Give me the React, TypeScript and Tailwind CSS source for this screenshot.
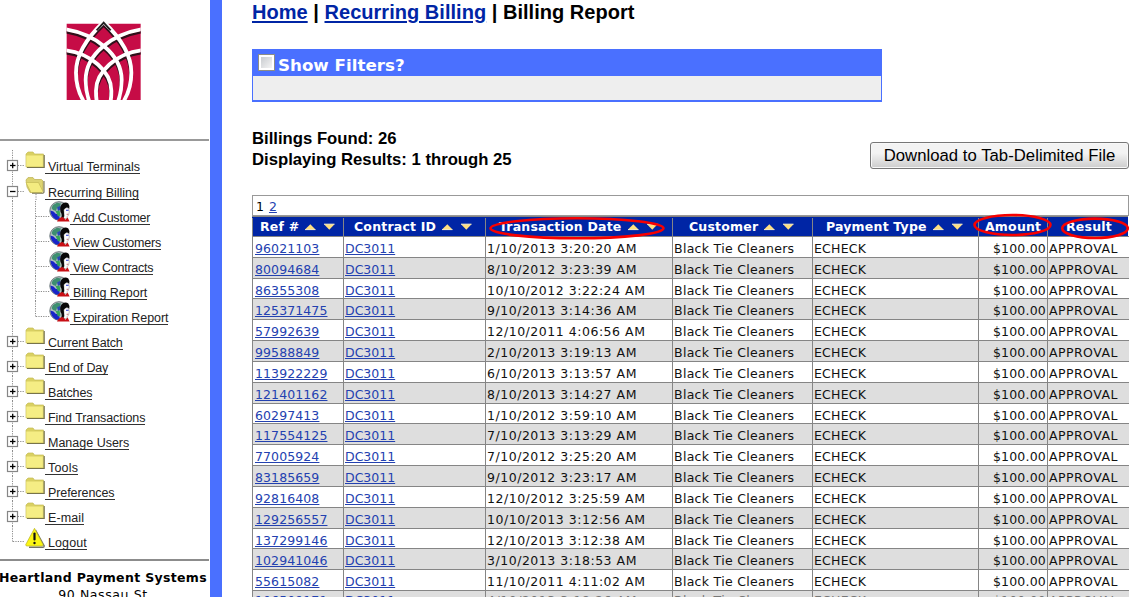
import React from "react";

type Row = [string, string];

const rows: Row[] = [
  ["96021103", "1/10/2013 3:20:20 AM"],
  ["80094684", "8/10/2012 3:23:39 AM"],
  ["86355308", "10/10/2012 3:22:24 AM"],
  ["125371475", "9/10/2013 3:14:36 AM"],
  ["57992639", "12/10/2011 4:06:56 AM"],
  ["99588849", "2/10/2013 3:19:13 AM"],
  ["113922229", "6/10/2013 3:13:57 AM"],
  ["121401162", "8/10/2013 3:14:27 AM"],
  ["60297413", "1/10/2012 3:59:10 AM"],
  ["117554125", "7/10/2013 3:13:29 AM"],
  ["77005924", "7/10/2012 3:25:20 AM"],
  ["83185659", "9/10/2012 3:23:17 AM"],
  ["92816408", "12/10/2012 3:25:59 AM"],
  ["129256557", "10/10/2013 3:12:56 AM"],
  ["137299146", "12/10/2013 3:12:38 AM"],
  ["102941046", "3/10/2013 3:18:53 AM"],
  ["55615082", "11/10/2011 4:11:02 AM"],
  ["106509171", "4/10/2013 3:18:26 AM"],
];

const COLS = "grid grid-cols-[91px_142px_187px_140px_166px_69px_81px]";

function Petals() {
  return (
    <>
      <path d="M311 66 C262 112 228 165 228 218 C228 250 236 278 250 302" />
      <path d="M424 88 C340 102 257 160 257 240 C257 262 260 282 267 302" />
      <path d="M424 151 C350 160 288 215 288 272 C288 282 288 292 290 302" />
    </>
  );
}

function Logo() {
  return (
    <svg width="78" height="84" viewBox="195 54 234 252" className="block">
      <defs>
        <clipPath id="logo-area">
          <path d="M200 56 H422 V300 H200 Z" />
        </clipPath>
      </defs>
      <path d="M200 71 H422 V300 H200 Z" fill="#c60c46" />
      <path d="M290 70 L311 58 L332 70 Z" fill="#fff" />
      <g clipPath="url(#logo-area)" fill="none">
        <g stroke="#30101a" strokeWidth="8">
          <g transform="translate(2 8)"><Petals /></g>
          <g transform="translate(620 8) scale(-1 1)"><Petals /></g>
        </g>
        <g stroke="#fff" strokeWidth="11.5">
          <Petals />
          <g transform="translate(622 0) scale(-1 1)"><Petals /></g>
        </g>
        <path d="M290 91 L311 68 L332 91" stroke="#222" strokeWidth="6" />
      </g>
    </svg>
  );
}

function Branch({ kind }: { kind: "plus" | "minus" | "line" | "end" }) {
  return (
    <svg width="25" height="25" viewBox="0 0 25 25" className="block shrink-0">
      <path
        d={kind === "end" ? "M12.5 0V16" : "M12.5 0V25"}
        stroke="#8c8c8c"
        strokeDasharray="1.2 1.2"
        fill="none"
      />
      {kind !== "line" && <path d="M13 15.5H25" stroke="#8c8c8c" strokeDasharray="1.2 1.2" />}
      {(kind === "plus" || kind === "minus") && (
        <>
          <rect x="7.5" y="10.5" width="10" height="10" fill="#fff" stroke="#868686" strokeWidth="1.2" />
          <path d="M10 15.5H15.5" stroke="#000" strokeWidth="1.3" />
          {kind === "plus" && <path d="M12.7 12.8V18.3" stroke="#000" strokeWidth="1.3" />}
        </>
      )}
    </svg>
  );
}

function Folder({ open }: { open?: boolean }) {
  return (
    <svg width="20" height="25" viewBox="0 0 20 25" className="block shrink-0">
      {open && <path d="M11 18V25" stroke="#8c8c8c" strokeDasharray="1.2 1.2" />}
      {open ? (
        <>
          <path d="M1 4L3 1.6H8L9.5 3.5H16.5L18 5V15L17 16.5H5L2 11Z" fill="#ddd471" stroke="#b9ad4d" strokeWidth=".7" />
          <path d="M1 6.5H13.5L18 15.5L17 16.5H6Z" fill="#f4ec80" stroke="#c5bb57" strokeWidth=".7" />
          <path d="M19 5V16.3L18 17.3H7" fill="none" stroke="#77734b" strokeWidth="1.1" />
        </>
      ) : (
        <>
          <path d="M1 16V4L3 2H8L9.5 4H18.5V17H1Z" fill="#d9d062" stroke="#c5bb57" strokeWidth=".7" />
          <path d="M1.3 5.5H17.8V16.5H1.3Z" fill="#f5ed84" />
          <path d="M19.2 5V17.5H2" fill="none" stroke="#77734b" strokeWidth="1.2" />
        </>
      )}
    </svg>
  );
}

function Person({ last }: { last?: boolean }) {
  return (
    <svg width="45" height="25" viewBox="0 0 45 25" className="block shrink-0">
      <path d={last ? "M10.5 0V15.5" : "M10.5 0V25"} stroke="#8c8c8c" strokeDasharray="1.2 1.2" />
      <path d="M11 15.5H25" stroke="#8c8c8c" strokeDasharray="1.2 1.2" />
      <circle cx="34" cy="9.9" r="9.2" fill="#b4c0c3" stroke="#59666b" strokeWidth=".9" />
      <path d="M28 4L32 1.8L36 2.4L35 5L32 7L31 10L28 9L26.5 7Z" fill="#3d8f70" />
      <path d="M25.4 9.5L28.5 10.5L31 13L34 13L35 18.8L31 18.6Q26 16 25.4 9.5Z" fill="#1724c8" />
      <path d="M32 6.5L35.5 4.5L35.5 9L33 10Z" fill="#2846b4" />
      <path d="M30.5 10L34.5 9.5L35.5 14.5L33 15.5Z" fill="#35a35c" />
      <path d="M35.8 17.5Q37.8 14 35.5 11Q34.3 5.5 37 3Q40.5 .4 43.3 2.6Q45 4.6 44.2 8L42.2 6.2Q39 7.5 39 12L41 17Z" fill="#080808" />
      <path d="M38.8 8.8Q41 5.6 43.6 7.2L44.3 10.8L43.6 14L42 15.8L42.2 17.6H38.3L39.2 15Z" fill="#fff" stroke="#333" strokeWidth=".3" />
      <path d="M41 9.3H43.6" stroke="#4456e0" strokeWidth="1.2" />
      <path d="M41.6 13.3H43.3" stroke="#b85555" strokeWidth=".8" />
      <path d="M32 20.4Q33.5 16.6 37.6 16L40.5 18.8L42.6 16.6L44.6 20.4Z" fill="#c80f15" />
    </svg>
  );
}

function Warning() {
  return (
    <svg width="20" height="25" viewBox="0 0 20 25" className="block shrink-0">
      <path d="M10.5 4L19.2 20Q19.2 21.2 18 21.2H4" fill="none" stroke="#737365" strokeWidth="1.4" />
      <path d="M9.5 2.3L18 18.5Q18 20 17 20H2Q.5 20 .8 18.5Z" fill="#fcf613" stroke="#b9b328" strokeWidth=".7" />
      <path d="M9.5 7.5V13.5" stroke="#111" strokeWidth="2.2" strokeLinecap="round" />
      <circle cx="9.5" cy="17" r="1.2" fill="#111" />
    </svg>
  );
}

function NavLink({ children, fit = "tracking-[-0.17px]" }: { children: string; fit?: string }) {
  return (
    <a className={`mt-[9px] h-[15px] whitespace-nowrap border-b border-[#333] pl-[3px] text-[12.5px] leading-[17px] text-[#222] ${fit}`}>
      {children}
    </a>
  );
}

function Sort() {
  return (
    <svg width="32" height="9" viewBox="0 0 32 9" className="ml-[5px] block shrink-0">
      <path d="M1 6.5L6.3 1.2L11.5 6.5Z" fill="#ffdf80" />
      <path d="M1 6.6H11.5" stroke="#fff0c4" />
      <path d="M20 1.2H30.5L25.3 6.8Z" fill="#ffdf80" />
      <path d="M20 1.2H30.5" stroke="#fff4c9" />
    </svg>
  );
}

function Head({ label, sort, pad }: { label: string; sort?: boolean; pad: string }) {
  return (
    <div className={`flex items-center border-l border-[#858585] whitespace-nowrap ${pad}`}>
      <span>{label}</span>
      {sort && <Sort />}
    </div>
  );
}

function Sidebar() {
  const top: [string, string][] = [
    ["Current Batch", "tracking-[-0.2px]"],
    ["End of Day", "tracking-[-0.17px]"],
    ["Batches", "tracking-[-0.1px]"],
    ["Find Transactions", "tracking-[-0.08px]"],
    ["Manage Users", "tracking-normal"],
    ["Tools", "tracking-[0.2px]"],
    ["Preferences", "tracking-[-0.08px]"],
    ["E-mail", "tracking-[0.1px]"],
  ];
  const sub: [string, string][] = [
    ["Add Customer", "tracking-[-0.22px]"],
    ["View Customers", "tracking-[-0.2px]"],
    ["View Contracts", "tracking-[-0.26px]"],
    ["Billing Report", "tracking-normal"],
    ["Expiration Report", "tracking-[-0.07px]"],
  ];
  return (
    <aside className="w-[210px] shrink-0">
      <div className="h-[139px] pt-[18px] pl-[65px]">
        <Logo />
      </div>
      <div className="mr-px h-[2px] bg-[#999]" />
      <nav className="mt-[9px]">
        <div className="flex h-[26px]"><Branch kind="plus" /><Folder /><NavLink fit="tracking-normal">Virtual Terminals</NavLink></div>
        <div className="flex h-[25px]"><Branch kind="minus" /><Folder open /><NavLink fit="tracking-normal">Recurring Billing</NavLink></div>
        {sub.map(([s, fit], i) => (
          <div key={s} className="flex h-[25px]">
            <Branch kind="line" /><Person last={i === sub.length - 1} /><NavLink fit={fit}>{s}</NavLink>
          </div>
        ))}
        {top.map(([s, fit]) => (
          <div key={s} className="flex h-[25px]"><Branch kind="plus" /><Folder /><NavLink fit={fit}>{s}</NavLink></div>
        ))}
        <div className="flex h-[25px]"><Branch kind="end" /><Warning /><NavLink fit="tracking-[0.1px]">Logout</NavLink></div>
      </nav>
      <div className="mt-[8px] mr-px h-[2px] bg-[#8c8c8c]" />
      <div className="-ml-px pt-[8px] font-['DejaVu_Sans',sans-serif] text-[12.5px] leading-[17px] text-black">
        <div className="whitespace-nowrap font-bold tracking-[0.33px]">Heartland Payment Systems</div>
        <div className="w-[208px] text-center tracking-[0.6px]">90 Nassau St</div>
      </div>
    </aside>
  );
}

export default function App() {
  return (
    <div className="relative flex h-[597px] w-[1129px] overflow-hidden bg-white font-['Liberation_Sans',sans-serif] text-black">
      <Sidebar />
      <div className="w-[12px] shrink-0 bg-[#4a70ff]" />
      <main className="w-[907px] shrink-0 pl-[30px]">
        <h1 className="h-[49px] whitespace-nowrap text-[20px] font-bold leading-[24px] tracking-[0.03px]">
          <a className="text-[#0025a5] underline decoration-2 underline-offset-2">Home</a> |{" "}
          <a className="text-[#0025a5] underline decoration-2 underline-offset-2">Recurring Billing</a> | Billing Report
        </h1>
        <section className="h-[53px] w-[630px] border border-b-2 border-[#4a70ff] bg-[#eee]">
          <div className="flex h-[26px] bg-[#4a70ff] pl-[5px]">
            <span className="mt-[4px] h-[17px] w-[17px] border border-[#8d8d85] bg-white p-[2px]">
              <span className="block h-full w-full bg-linear-to-br from-[#c9ccd0] to-[#f5f5f5]" />
            </span>
            <span className="ml-[3px] pt-[5px] font-['DejaVu_Sans',sans-serif] text-[16.7px] font-bold leading-[21px] text-white">Show Filters?</span>
          </div>
        </section>
        <div className="flex h-[93px] justify-between">
          <div className="pt-[26px] text-[16.7px] font-bold leading-[21px]">
            <p>Billings Found: 26</p>
            <p>Displaying Results: 1 through 25</p>
          </div>
          <button className="mt-[40px] h-[27px] w-[259px] whitespace-nowrap rounded-[3px] border border-[#777] bg-linear-to-b from-[#f3f3f3] from-40% to-[#cdcdcd] text-[16.7px] leading-[24px] tracking-[0.03px] shadow-[inset_0_0_0_1px_#f8f8f8]">
            Download to Tab-Delimited File
          </button>
        </div>
        <div className="w-[877px] font-['DejaVu_Sans',sans-serif] text-[12.5px]">
          <div className="flex h-[21px] w-[877px] gap-[5px] border border-[#999] pl-[3px] leading-[21px]">
            <span>1</span>
            <a className="text-[#2341b0] underline">2</a>
          </div>
          <div className={`${COLS} h-[20px] w-[876px] border-t border-[#858585] bg-[#0025a5] pt-px font-bold tracking-[0.2px] text-white`}>
            <Head label="Ref #" sort pad="pl-[7px]" />
            <Head label="Contract ID" sort pad="pl-[10px]" />
            <Head label="Transaction Date" sort pad="pl-[13px]" />
            <Head label="Customer" sort pad="pl-[16px]" />
            <Head label="Payment Type" sort pad="pl-[13px]" />
            <Head label="Amount" pad="pl-[6px]" />
            <Head label="Result" pad="pl-[18px]" />
          </div>
          {rows.map(([id, date], i) => (
            <div
              key={id}
              className={`${COLS} h-[20.83px] w-[877px] border-t border-[#858585] whitespace-nowrap *:border-l *:border-[#858585] *:pl-px ${i === rows.length - 1 ? "leading-[20px] text-[#777]" : "leading-[23px] text-[#111]"} ${i % 2 ? "bg-[#dedede]" : "bg-white"}`}
            >
              <div><a className="ml-px tracking-[0.1px] text-[#2341b0] underline">{id}</a></div>
              <div><a className="text-[#2341b0] underline">DC3011</a></div>
              <div className="tracking-[0.52px]">{date}</div>
              <div className="tracking-[0.3px]">Black Tie Cleaners</div>
              <div className="tracking-[0.2px]">ECHECK</div>
              <div className="pr-px text-right tracking-[0.2px]">$100.00</div>
              <div className="tracking-[0.45px]">APPROVAL</div>
            </div>
          ))}
        </div>
      </main>
      <svg className="pointer-events-none absolute left-[480px] top-[205px]" width="649" height="40" viewBox="480 205 649 40" fill="none" stroke="#f80000" strokeWidth="2.6">
        <ellipse cx="577" cy="228.3" rx="86.5" ry="10" />
        <ellipse cx="1012.5" cy="225" rx="38" ry="10" />
        <ellipse cx="1095" cy="228.3" rx="32.8" ry="9.7" />
      </svg>
    </div>
  );
}
